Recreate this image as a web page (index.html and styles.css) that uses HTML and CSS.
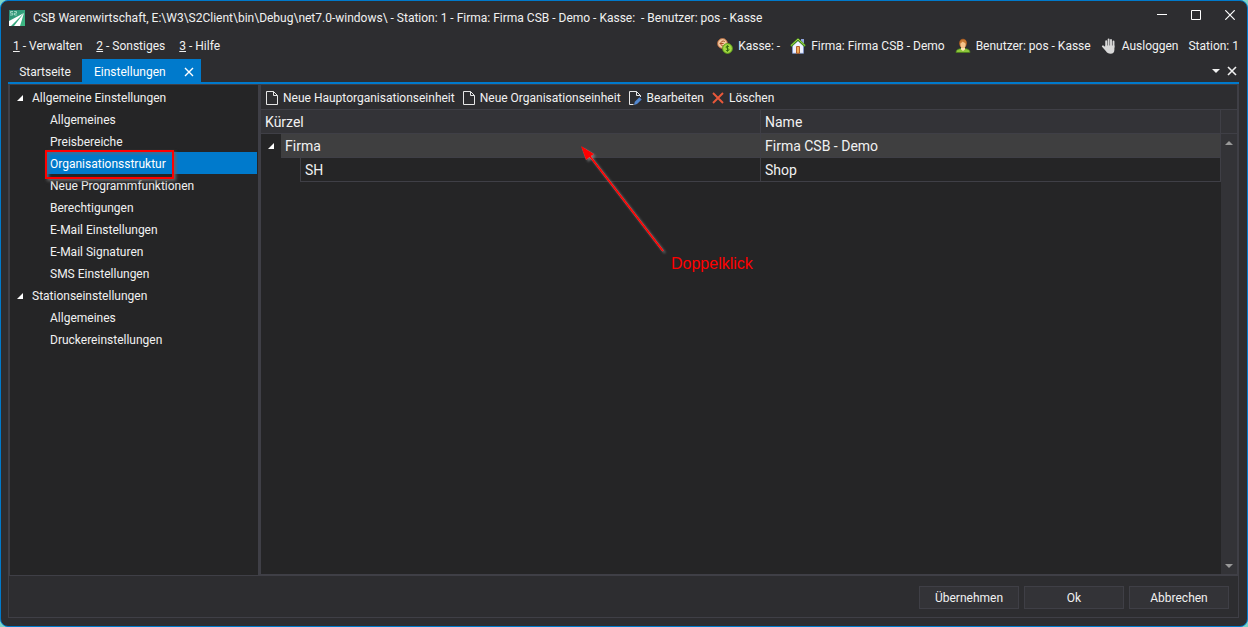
FILE: index.html
```html
<!DOCTYPE html>
<html lang="de">
<head>
<meta charset="utf-8">
<title>CSB Warenwirtschaft</title>
<link rel="stylesheet" href="styles.css">
</head>
<body>
<div class="window">
  <header class="titlebar">
    <svg class="logo" width="16" height="16" viewBox="0 0 16 16"><defs><linearGradient id="lg" x2="1" y2="1"><stop stop-color="#2a8573"/><stop offset="1" stop-color="#3fbd85"/></linearGradient></defs><path fill="url(#lg)" d="M0 0h16v16H0z"/><path fill="#fff" d="M15 3 0 11v5h2z"/><path fill="#fff" d="M15 3 5 16h6z"/><path d="M4 1.500H1.500V3.200H3.800V5H1M5.200 1.500H7.500V3.200H5.500V5H7.800" fill="none" stroke="#b9e6d2" stroke-width=".8"/></svg>
    <h1 class="title">CSB Warenwirtschaft, E:\W3\S2Client\bin\Debug\net7.0-windows\ - Station: 1 - Firma: Firma CSB - Demo - Kasse:&nbsp; - Benutzer: pos - Kasse</h1>
    <div class="window-controls">
      <button class="icon-button" aria-label="Minimieren"><svg width="10" height="10" viewBox="0 0 10 10"><path d="M0 4.500h10" stroke="#fff"/></svg></button>
      <button class="icon-button" aria-label="Maximieren"><svg width="10" height="10" viewBox="0 0 10 10"><path d="M.5.5h9v9h-9z" fill="none" stroke="#fff"/></svg></button>
      <button class="icon-button" aria-label="Schließen"><svg width="10" height="10" viewBox="0 0 10 10"><path d="m.3.3 9.400 9.400m0-9.400L.3 9.700" stroke="#fff" stroke-width="1.200"/></svg></button>
    </div>
  </header>

  <div class="menubar">
    <nav class="menu">
      <button><u>1</u> - Verwalten</button>
      <button><u>2</u> - Sonstiges</button>
      <button><u>3</u> - Hilfe</button>
    </nav>
    <div class="status">
      <span class="status-item"><svg width="16" height="16" viewBox="0 0 16 16"><circle cx="5.500" cy="5.500" r="4.900" fill="#f3c9a0" stroke="#b5683c"/><path d="M7.800 3.500C5.500 2.300 3.800 3.600 3.800 5.500s1.700 3.200 3.700 2.400M2.600 5.500h4" fill="none" stroke="#a84f24"/><circle cx="10.500" cy="10.500" r="4.900" fill="#a4d840" stroke="#5c9a1d"/><path d="M12 8.600c-1.300-.8-3-.5-3 .5 0 1.300 3 1.300 3 2.600 0 1.200-1.800 1.400-3.100.6M10.500 7.300v6.400" fill="none" stroke="#2c650f" stroke-width=".9"/></svg>Kasse: -</span>
      <span class="status-item"><svg width="16" height="16" viewBox="0 0 16 16"><path fill="#8fa2dc" d="M11 1h3v5h-3z"/><path fill="#eef2ff" stroke="#7e95cf" stroke-width=".8" d="M2.500 7.500 8 2.500l5.500 5v7.800h-11z"/><path d="M.8 8.200 8 1.500l7.200 6.700" fill="none" stroke="#438b1c" stroke-width="2.300"/><path d="M1 7.500 8 1l7 6.500" fill="none" stroke="#a9dd4b"/><path fill="#f2ac56" stroke="#aa521e" stroke-width=".9" d="M6.500 8.500h3v6.800h-3z"/></svg>Firma: Firma CSB - Demo</span>
      <span class="status-item"><svg width="16" height="16" viewBox="0 0 16 16"><path fill="#8cc63a" stroke="#4a8317" stroke-width=".7" d="M1 14.500c0-2.700 2-3.500 5-4h4c3 .5 5 1.300 5 4z"/><path fill="#ffe3b2" d="M6 9h4v2.500L8 13l-2-1.500z"/><ellipse cx="8" cy="5.300" rx="3.900" ry="4.500" fill="#a65b22"/><ellipse cx="8" cy="6.400" rx="2.700" ry="3.500" fill="#f5c38b"/><path fill="#c77934" d="M4.800 5C5 2 7 1.500 9 1.800s2.500 1.500 2.300 3.500C9.500 5 8.500 4 7.500 3.500c-.5 1-1.500 1.500-2.700 1.500z"/></svg>Benutzer: pos - Kasse</span>
      <button class="status-item"><svg width="16" height="16" viewBox="0 0 16 16"><path d="M5.200 9V3.200M7.600 8V1.500M10 8V2M12.500 9V3.500" stroke="#d8d8d8" stroke-width="1.900" stroke-linecap="round"/><path fill="#d8d8d8" d="M4.300 7.500h9.100v4.300c0 2.500-1.300 3.900-3.800 3.900-2.300 0-3.600-.9-4.800-2.700L1 8.700c-.5-.9.700-1.600 1.500-1.100l1.800 1.500z"/></svg>Ausloggen</button>
      <span class="station">Station: 1</span>
    </div>
  </div>

  <div class="tabs">
    <button class="tab">Startseite</button>
    <div class="tab tab-active"><button class="tab-label">Einstellungen</button><button class="icon-button" aria-label="Tab schließen"><svg width="10" height="10" viewBox="0 0 10 10"><path d="m1 1 8 8m0-8L1 9" stroke="#fff" stroke-width="1.400"/></svg></button></div>
    <div class="tab-tools">
      <button class="icon-button" aria-label="Tabliste"><svg width="8" height="4" viewBox="0 0 8 4"><path fill="#f1f1f1" d="M0 0h8L4 4z"/></svg></button>
      <button class="icon-button" aria-label="Alle schließen"><svg width="10" height="10" viewBox="0 0 10 10"><path d="m1 1 8 8m0-8L1 9" stroke="#f1f1f1" stroke-width="1.600"/></svg></button>
    </div>
  </div>

  <main class="page">
    <div class="panes">
      <nav class="tree">
        <button class="node parent"><svg width="6" height="6" viewBox="0 0 6 6"><path fill="#fff" d="M6 0v6H0z"/></svg>Allgemeine Einstellungen</button>
        <button class="node">Allgemeines</button>
        <button class="node">Preisbereiche</button>
        <div class="marked"><button class="node selected">Organisationsstruktur</button><span class="frame"></span></div>
        <button class="node">Neue Programmfunktionen</button>
        <button class="node">Berechtigungen</button>
        <button class="node">E-Mail Einstellungen</button>
        <button class="node">E-Mail Signaturen</button>
        <button class="node">SMS Einstellungen</button>
        <button class="node parent"><svg width="6" height="6" viewBox="0 0 6 6"><path fill="#fff" d="M6 0v6H0z"/></svg>Stationseinstellungen</button>
        <button class="node">Allgemeines</button>
        <button class="node">Druckereinstellungen</button>
      </nav>

      <section class="content">
        <div class="toolbar">
          <button><svg width="12" height="14" viewBox="0 0 12 14"><path d="M.5.5h7l4 4v9H.5zM7.500.5v4h4" fill="none" stroke="#e6e6e6"/></svg>Neue Hauptorganisationseinheit</button>
          <button><svg width="12" height="14" viewBox="0 0 12 14"><path d="M.5.5h7l4 4v9H.5zM7.500.5v4h4" fill="none" stroke="#e6e6e6"/></svg>Neue Organisationseinheit</button>
          <button><svg width="13" height="14" viewBox="0 0 13 14"><path d="M4.500 13.500h-4V.5h7l4 4V6M7.500.5v4h4" fill="none" stroke="#e6e6e6"/><path fill="#5287cf" d="m5 14 .8-3.300 4.600-4.500 2.300 2.200L8 13z"/></svg>Bearbeiten</button>
          <button><svg width="12" height="12" viewBox="0 0 12 12"><path d="m1 1 10 10m0-10L1 11" stroke="#e9583a" stroke-width="1.900"/></svg>Löschen</button>
        </div>
        <div class="grid">
          <table>
            <colgroup><col class="c-toggle"><col class="c-indent"><col class="c-code"><col></colgroup>
            <thead><tr><th colspan="3">Kürzel</th><th>Name</th></tr></thead>
            <tbody>
              <tr class="current"><td class="gutter"><button class="icon-button" aria-label="Zuklappen"><svg width="6" height="6" viewBox="0 0 6 6"><path fill="#fff" d="M6 0v6H0z"/></svg></button></td><td colspan="2">Firma</td><td>Firma CSB - Demo</td></tr>
              <tr><td class="gutter"></td><td class="gutter indent"></td><td>SH</td><td>Shop</td></tr>
            </tbody>
          </table>
          <div class="scroll">
            <div class="scroll-head"></div>
            <button class="icon-button" aria-label="Nach oben"><svg width="8" height="4" viewBox="0 0 8 4"><path fill="#999" d="M0 4h8L4 0z"/></svg></button>
            <div class="scroll-track"></div>
            <button class="icon-button" aria-label="Nach unten"><svg width="8" height="4" viewBox="0 0 8 4"><path fill="#999" d="M0 0h8L4 4z"/></svg></button>
          </div>
          <div class="hint">
            <svg width="90" height="112" viewBox="0 0 90 112"><defs><filter id="s" x="-20%" y="-20%" width="150%" height="150%"><feDropShadow dx="2" dy="2" stdDeviation="1" flood-color="#999" flood-opacity=".6"/></filter></defs><g filter="url(#s)"><path d="m8 9 74 96" stroke="red" stroke-width="2"/><path fill="red" d="m0 0 13 8-8 6z"/></g></svg>
            <span>Doppelklick</span>
          </div>
        </div>
      </section>
    </div>
    <footer class="actions">
      <button>Übernehmen</button>
      <button>Ok</button>
      <button>Abbrechen</button>
    </footer>
  </main>
</div>
</body>
</html>
```
FILE: styles.css
```css
* { box-sizing: border-box; }
body { margin: 0; background: #7fd6c8; color: #f1f1f1; font: 12px/16px Roboto, "Open Sans", sans-serif; }
button { margin: 0; padding: 0; border: 0; background: none; color: inherit; font: inherit; white-space: nowrap; }
svg { display: block; flex: none; }
.icon-button { display: flex; align-items: center; justify-content: center; }

.window { display: flex; flex-direction: column; height: 100vh; padding: 0 8px 8px 7px; border: 1px solid #007acc; border-radius: 8px; background: #2d2d30; }

.titlebar { display: flex; align-items: center; height: 33px; }
.logo { margin: 0 8px 0 1px; }
.title { margin: 0; font-size: 12px; font-weight: 400; white-space: nowrap; }
.window-controls { display: flex; gap: 24px; margin-left: auto; padding: 0 4px 6px 0; }

.menubar { display: flex; align-items: center; justify-content: space-between; height: 24px; margin-bottom: 1px; }
.menu { display: flex; gap: 14px; padding-left: 5px; }
.status { display: flex; align-items: center; gap: 10px; }
.status-item { display: flex; align-items: center; gap: 5px; white-space: nowrap; }

.tabs { display: flex; height: 25px; border-bottom: 2px solid #007acc; }
.tab { width: 74px; padding-top: 2px; }
.tab-active { display: flex; align-items: center; justify-content: space-between; width: 119px; padding: 2px 7px 0 12px; background: #007acc; color: #fff; }
.tab-tools { display: flex; gap: 7px; margin-left: auto; padding-right: 2px; }

.page { display: flex; flex: 1; flex-direction: column; min-height: 0; border: 1px solid #3f3f46; border-top: 0; }
.panes { display: flex; flex: 1; min-height: 0; border-bottom: 1px solid #3f3f46; }
.tree { flex: none; width: 250px; padding: 1px 1px 0 0; border: solid #3f3f46; border-width: 1px 1px 0 1px; background: #252526; }
.node { display: block; width: calc(100% - 37px); height: 22px; margin-left: 37px; padding: 2px 0 0 3px; text-align: left; }
.parent { display: flex; align-items: center; gap: 9px; width: 100%; margin-left: 0; padding-left: 7px; }
.selected { background: #007acc; color: #fff; }
.marked { position: relative; }
.frame { position: absolute; top: -2px; left: 35px; width: 129px; height: 29px; border: 2px solid red; box-shadow: 2px 2px 3px #666, inset 2px 2px 3px #3f6f94; }

.content { display: flex; flex: 1; flex-direction: column; min-width: 0; border: 1px solid #3f3f46; border-width: 1px 1px 1px 2px; background: #252526; }
.toolbar { display: flex; align-items: center; gap: 8px; height: 25px; padding: 1px 0 0 5px; border-bottom: 1px solid #3f3f46; background: #2d2d30; }
.toolbar button { display: flex; align-items: center; gap: 5px; }
.grid { position: relative; display: flex; flex: 1; align-items: flex-start; min-height: 0; }
table { flex: 1; border-collapse: separate; border-spacing: 0; table-layout: fixed; font-size: 14px; line-height: 20px; }
.c-toggle, .c-indent { width: 20px; }
.c-code { width: 460px; }
th, td { height: 24px; padding: 0 4px; border: solid #3f3f46; border-width: 0 1px 1px 0; text-align: left; font-weight: 400; }
th { background: #333337; }
.current td { background: #3f3f40; }
td.gutter { padding: 0 0 0 7px; border: 0; background: #252526; }
.current td.gutter { background: #252526; }
td.indent { border-right: 1px solid #3f3f46; }
.scroll { display: flex; flex-direction: column; align-self: stretch; width: 16px; background: #333337; }
.scroll-head { height: 24px; border-bottom: 1px solid #3f3f46; }
.scroll button { height: 17px; }
.scroll-track { flex: 1; }
.hint { position: absolute; top: 36px; left: 320px; display: flex; align-items: flex-end; color: red; font: 16px/20px "Liberation Sans", Arial, sans-serif; }
.hint span { margin-bottom: -16px; }

.actions { display: flex; justify-content: flex-end; gap: 5px; padding: 10px 9px 8px; }
.actions button { width: 100px; height: 23px; border: 1px solid #3f3f46; background: #333337; }
```
